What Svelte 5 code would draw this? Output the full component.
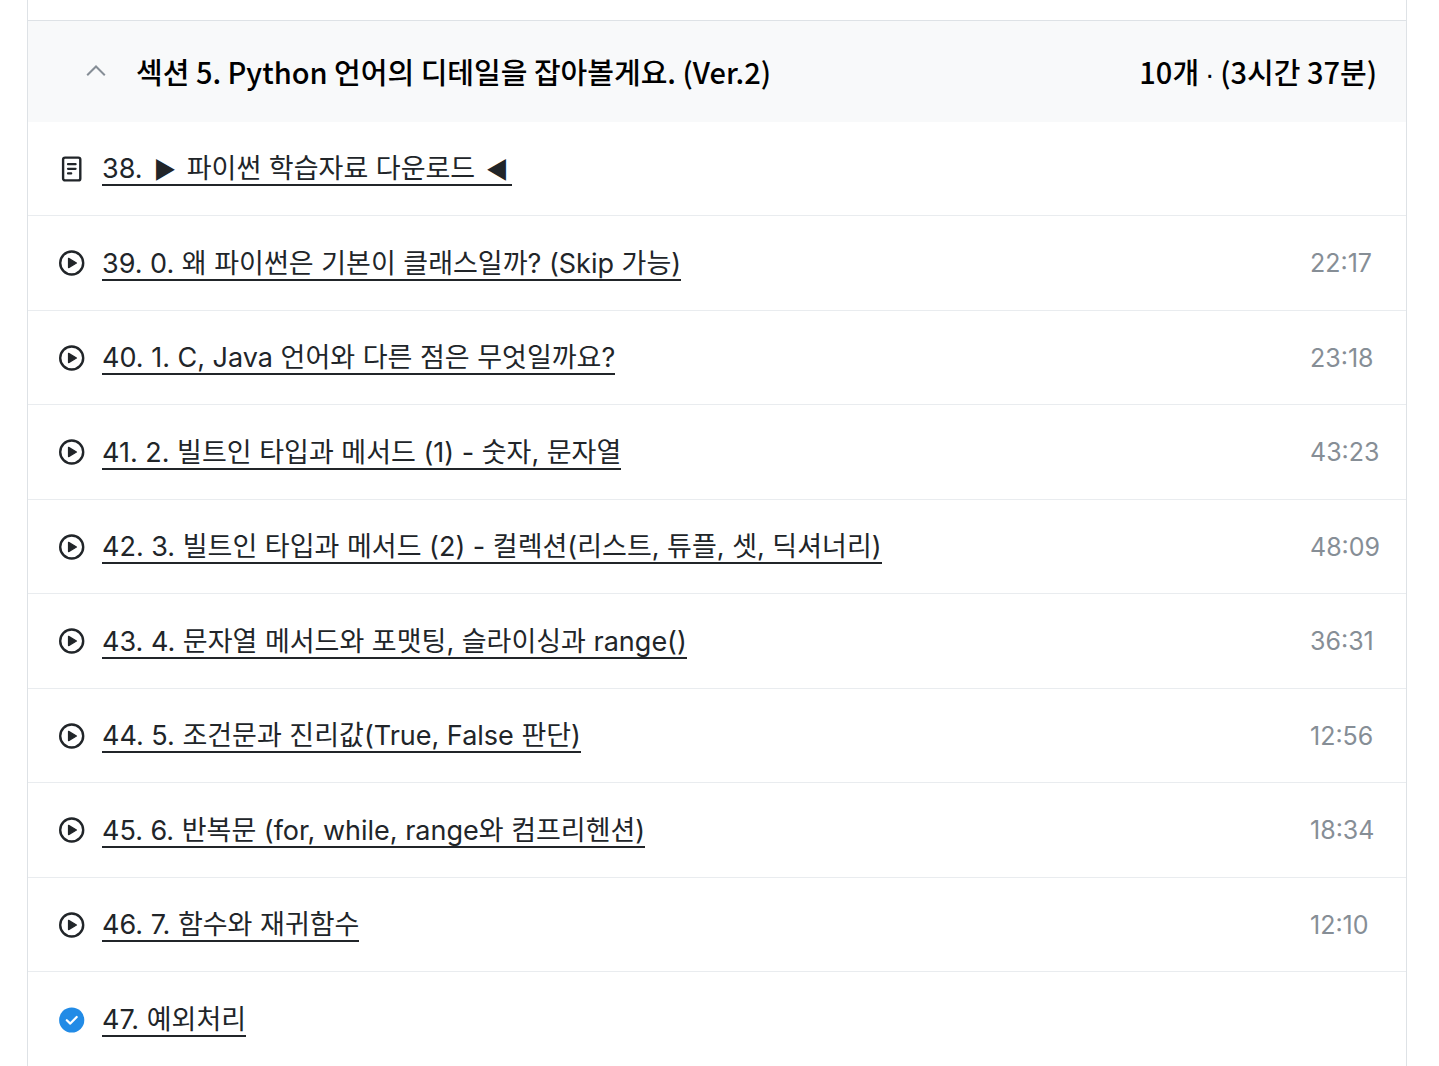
<script lang="ts">
	let open = $state(true);

	const lessons = [
		{ type: 'doc', title: '38. ▶ 파이썬 학습자료 다운로드 ◀', time: '' },
		{ type: 'video', title: '39. 0. 왜 파이썬은 기본이 클래스일까? (Skip 가능)', time: '22:17' },
		{ type: 'video', title: '40. 1. C, Java 언어와 다른 점은 무엇일까요?', time: '23:18' },
		{ type: 'video', title: '41. 2. 빌트인 타입과 메서드 (1) - 숫자, 문자열', time: '43:23' },
		{ type: 'video', title: '42. 3. 빌트인 타입과 메서드 (2) - 컬렉션(리스트, 튜플, 셋, 딕셔너리)', time: '48:09' },
		{ type: 'video', title: '43. 4. 문자열 메서드와 포맷팅, 슬라이싱과 range()', time: '36:31' },
		{ type: 'video', title: '44. 5. 조건문과 진리값(True, False 판단)', time: '12:56' },
		{ type: 'video', title: '45. 6. 반복문 (for, while, range와 컴프리헨션)', time: '18:34' },
		{ type: 'video', title: '46. 7. 함수와 재귀함수', time: '12:10' },
		{ type: 'done', title: '47. 예외처리', time: '' }
	];

	// keeps the arrows as separate parts so they can be drawn smaller
	function titleParts(title: string) {
		return title.split(/([▶◀])/).filter((part) => part !== '');
	}
</script>

<section class="curriculum">
	<button class="section-header" aria-expanded={open} onclick={() => (open = !open)}>
		<svg class="chevron" class:closed={!open} viewBox="0 0 20 20" aria-hidden="true">
			<path d="M1.2 14.3L10 5.5L18.8 14.3" />
		</svg>
		<span class="section-title">섹션 5. Python 언어의 디테일을 잡아볼게요. (Ver.2)</span>
		<span class="section-info">10개 ∙ (3시간 37분)</span>
	</button>
	{#if open}
		<ul>
			{#each lessons as lesson}
				<li>
					<svg class="icon" viewBox="0 0 26 26" aria-hidden="true">
						{#if lesson.type === 'doc'}
							<rect class="line" x="4.1" y="1.6" width="17.2" height="22.8" rx="2" />
							<path class="bar" d="M9 8.2H16.6M9 12.8H16.6M9 17.4H12.2" />
						{:else if lesson.type === 'video'}
							<circle class="line" cx="12.7" cy="13" r="11.5" />
							<path class="solid" d="M9.6 8.4V17.6L17.4 13Z" />
						{:else}
							<circle class="blue" cx="12.7" cy="13" r="12.6" />
							<path class="check" d="M7.8 13.2L11.3 16.6L17.7 10" />
						{/if}
					</svg>
					<a href="#lesson">
						{#each titleParts(lesson.title) as part}<span class:arrow={part === '▶' || part === '◀'}>{part}</span>{/each}
					</a>
					{#if lesson.time}
						<span class="time">{lesson.time}</span>
					{/if}
				</li>
			{/each}
		</ul>
	{/if}
</section>

<style>
	:global(body) {
		background: #fff;
		font-family: Inter, 'Noto Sans CJK KR', sans-serif;
	}

	.curriculum {
		margin: 0 32px 0 27px;
		padding-top: 20px;
		border: solid #dee2e6;
		border-width: 0 1px;
	}

	.section-header {
		display: flex;
		align-items: center;
		width: 100%;
		height: 102px;
		padding: 0 29px 2px 58px;
		border: none;
		border-top: 1px solid #dee2e6;
		background: #f8f9fa;
		color: #000;
		font-family: 'Noto Sans CJK KR', sans-serif;
		font-size: 29px;
		font-weight: 500;
		text-align: left;
		cursor: pointer;
	}

	.chevron {
		flex: none;
		width: 20px;
		height: 20px;
		margin-right: 30px;
		fill: none;
		stroke: #868e96;
		stroke-width: 2;
	}

	.chevron.closed {
		transform: rotate(180deg);
	}

	.section-title {
		flex: 1;
	}

	ul {
		margin: 0;
		padding: 0;
		list-style: none;
	}

	li {
		display: flex;
		align-items: center;
		box-sizing: border-box;
		height: 94px;
		padding: 0 24px 0 31px;
		border-bottom: 1px solid #e9ecef;
	}

	li:nth-child(even) {
		height: 95px;
	}

	li:last-child {
		border-bottom: none;
	}

	.icon {
		flex: none;
		width: 26px;
		height: 26px;
		margin-right: 17px;
	}

	.line {
		fill: none;
		stroke: #212529;
		stroke-width: 2.4;
	}

	.bar {
		fill: none;
		stroke: #212529;
		stroke-width: 2.2;
		stroke-linecap: round;
	}

	.solid {
		fill: #212529;
		stroke: #212529;
		stroke-width: 1.4;
		stroke-linejoin: round;
	}

	.blue {
		fill: #228be6;
	}

	.check {
		fill: none;
		stroke: #fff;
		stroke-width: 2.2;
		stroke-linecap: round;
		stroke-linejoin: round;
	}

	a {
		padding-top: 3px;
		border-bottom: 2px solid #212529;
		color: #212529;
		font-size: 27px;
		line-height: 30px;
		text-decoration: none;
	}

	.arrow {
		padding: 0 3px;
		font-family: 'Noto Sans CJK KR', sans-serif;
		font-size: 23px;
		line-height: 1;
	}

	.time {
		width: 72px;
		margin-left: auto;
		color: #868e96;
		font-size: 25px;
	}
</style>
